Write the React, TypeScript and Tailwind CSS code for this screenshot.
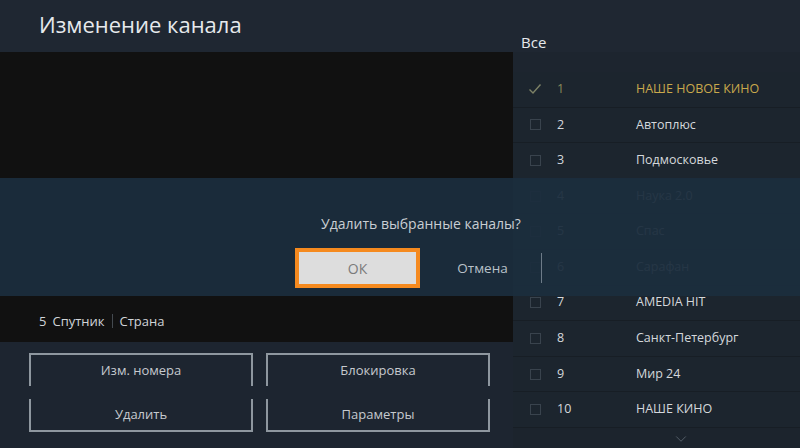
import { ChevronDown } from 'lucide-react';

const channels = [
  { num: 1, name: 'НАШЕ НОВОЕ КИНО', checked: true },
  { num: 2, name: 'Автоплюс' },
  { num: 3, name: 'Подмосковье' },
  { num: 4, name: 'Наука 2.0' },
  { num: 5, name: 'Спас' },
  { num: 6, name: 'Сарафан' },
  { num: 7, name: 'AMEDIA HIT' },
  { num: 8, name: 'Санкт-Петербург' },
  { num: 9, name: 'Мир 24' },
  { num: 10, name: 'НАШЕ КИНО' },
];

function ChannelRow({ num, name, checked }: { num: number; name: string; checked?: boolean }) {
  return (
    <div className="flex h-[35.6px] items-center border-b border-[#171e25] bg-[#1c252e] text-[12.5px]">
      <div className="flex w-[44px] justify-center">
        {checked ? (
          <svg width="14" height="12" viewBox="0 0 14 12" fill="none">
            <path d="M1.5 6.5 L5 10 L12.5 1.5" stroke="#7d8266" strokeWidth="1.4" />
          </svg>
        ) : (
          <div className="h-[11px] w-[11px] border border-[#39434d]" />
        )}
      </div>
      <div className={`w-[79px] ${checked ? 'text-[#8a8a5a]' : 'text-[#d4d8dc]'}`}>{num}</div>
      <div className={checked ? 'text-[#c9a94c]' : 'text-[#d4d8dc]'}>{name}</div>
    </div>
  );
}

function ActionButton({ label, top }: { label: string; top?: boolean }) {
  return (
    <div
      className={`flex h-[33px] items-center justify-center border-x-2 border-[#8e979f] text-[13px] text-[#c6cacf] ${
        top ? 'border-t-2' : 'border-b-2'
      }`}
    >
      {label}
    </div>
  );
}

export default function App() {
  return (
    <div
      className="relative h-[448px] w-[800px] overflow-hidden bg-[#1c242d]"
      style={{ fontFamily: '"Open Sans", "Noto Sans", sans-serif' }}
    >
      <div className="flex h-full">
        {/* левая часть */}
        <div className="flex w-[513px] flex-col">
          <div className="flex h-[52px] items-center bg-[#1f2732] pl-[39px] pb-[3px] text-[22px] text-[#e6e9ec]">
            Изменение канала
          </div>
          <div className="flex h-[290px] flex-col justify-end bg-[#111111] pb-[11px] pl-[39px]">
            <div className="flex items-center text-[13px] text-[#d0d4d8]">
              <span>5</span>
              <span className="ml-[6px]">Спутник</span>
              <span className="mx-[7px] h-[14px] w-px bg-[#444a50]" />
              <span>Страна</span>
            </div>
          </div>
          <div className="grid flex-1 grid-cols-2 gap-x-[13px] bg-[#1d2530] pl-[29px] pr-[23px] pt-[11px]">
            <div className="flex flex-col gap-[13px]">
              <ActionButton label="Изм. номера" top />
              <ActionButton label="Удалить" />
            </div>
            <div className="flex flex-col gap-[13px]">
              <ActionButton label="Блокировка" top />
              <ActionButton label="Параметры" />
            </div>
          </div>
        </div>

        {/* список каналов */}
        <div className="flex flex-1 flex-col">
          <div className="h-[52px] bg-[#1f2732]" />
          <div className="flex h-[20px] items-start bg-[#1d252f] pl-[8px] text-[15px] leading-[0] text-[#e6e9ec]">
            <span className="-mt-[10px]">Все</span>
          </div>
          <div className="flex flex-col">
            {channels.map((c) => (
              <ChannelRow key={c.num} {...c} />
            ))}
          </div>
          <div className="flex flex-1 justify-center pt-[2px] text-[#59636d]">
            <ChevronDown size={18} strokeWidth={1.2} className="ml-[48px]" />
          </div>
        </div>
      </div>

      {/* диалог */}
      <div className="absolute left-0 right-0 top-[178px] flex h-[118px] flex-col bg-[#1b2d3d]/95">
        <div className="flex justify-center pl-[42px] pt-[35px] text-[14px] text-[#c9ced3]">
          Удалить выбранные каналы?
        </div>
        <div className="mt-[14px] flex items-center pl-[295px]">
          <div className="flex h-[40px] w-[125px] items-center justify-center border-[4px] border-[#f58a1f] bg-[#dddddd] text-[14px] text-[#7a7a7a]">
            ОК
          </div>
          <div className="flex w-[121px] justify-center pl-[4px] text-[13.5px] text-[#b9c1c9]">Отмена</div>
          <div className="h-[30px] w-px bg-[#6d7b88]" />
        </div>
      </div>
    </div>
  );
}
